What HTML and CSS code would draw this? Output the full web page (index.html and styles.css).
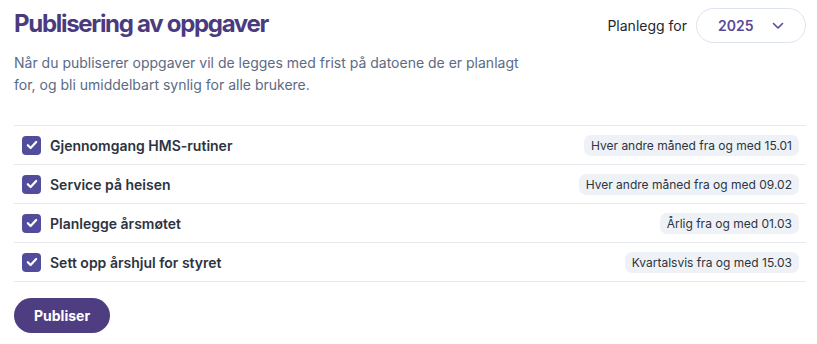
FILE: index.html
```html
<!DOCTYPE html>
<html lang="no">
<head>
    <meta charset="UTF-8">
    <meta name="viewport" content="width=device-width, initial-scale=1.0">
    <title>Publisering av oppgaver</title>
    <link rel="stylesheet" href="styles.css">
</head>
<body>
    <div class="panel">
        <div class="header">
            <div class="intro">
                <h1 class="title">Publisering av oppgaver</h1>
                <p class="desc">Når du publiserer oppgaver vil de legges med frist på datoene de er planlagt for, og bli umiddelbart synlig for alle brukere.</p>
            </div>
            <div class="plan">
                <span class="plan-label">Planlegg for</span>
                <div class="select">
                    <span class="select-value">2025</span>
                    <svg class="chevron" width="12" height="8" viewBox="0 0 12 8"><path d="M1.5 1.5 6 6l4.5-4.5" fill="none" stroke="#5a4a96" stroke-width="1.6" stroke-linecap="round" stroke-linejoin="round"/></svg>
                </div>
            </div>
        </div>

        <div class="tasks">
            <div class="task">
                <span class="check"><svg width="12" height="10" viewBox="0 0 12 10"><path d="M1.8 5.2 4.6 8 10.2 2" fill="none" stroke="#fff" stroke-width="2.2" stroke-linecap="round" stroke-linejoin="round"/></svg></span>
                <span class="task-name">Gjennomgang HMS-rutiner</span>
                <span class="pill">Hver andre måned fra og med 15.01</span>
            </div>
            <div class="task">
                <span class="check"><svg width="12" height="10" viewBox="0 0 12 10"><path d="M1.8 5.2 4.6 8 10.2 2" fill="none" stroke="#fff" stroke-width="2.2" stroke-linecap="round" stroke-linejoin="round"/></svg></span>
                <span class="task-name">Service på heisen</span>
                <span class="pill">Hver andre måned fra og med 09.02</span>
            </div>
            <div class="task">
                <span class="check"><svg width="12" height="10" viewBox="0 0 12 10"><path d="M1.8 5.2 4.6 8 10.2 2" fill="none" stroke="#fff" stroke-width="2.2" stroke-linecap="round" stroke-linejoin="round"/></svg></span>
                <span class="task-name">Planlegge årsmøtet</span>
                <span class="pill">Årlig fra og med 01.03</span>
            </div>
            <div class="task">
                <span class="check"><svg width="12" height="10" viewBox="0 0 12 10"><path d="M1.8 5.2 4.6 8 10.2 2" fill="none" stroke="#fff" stroke-width="2.2" stroke-linecap="round" stroke-linejoin="round"/></svg></span>
                <span class="task-name">Sett opp årshjul for styret</span>
                <span class="pill">Kvartalsvis fra og med 15.03</span>
            </div>
        </div>

        <button class="publish">Publiser</button>
    </div>
</body>
</html>
```

FILE: styles.css
```css
body {
    margin: 0;
    font-family: Inter, "Noto Sans", sans-serif;
    background: #ffffff;
    color: #2d3340;
}
.panel {
    padding: 8px 11px 0 14px;
}
.header {
    display: flex;
    justify-content: space-between;
    align-items: flex-start;
}
.title {
    margin: 0;
    font-size: 24px;
    font-weight: 700;
    letter-spacing: -1.3px;
    line-height: 32px;
    color: #4b3b7e;
}
.desc {
    margin: 12px 0 0;
    max-width: 520px;
    font-size: 14px;
    line-height: 22px;
    color: #5b6a85;
}
.plan {
    display: flex;
    align-items: center;
    gap: 9px;
}
.plan-label {
    font-size: 14px;
    color: #222733;
}
.select {
    display: flex;
    align-items: center;
    justify-content: space-between;
    box-sizing: border-box;
    width: 110px;
    height: 35px;
    padding: 0 21px 0 21px;
    border: 1px solid #dde3ee;
    border-radius: 18px;
}
.select-value {
    font-size: 14px;
    font-weight: 600;
    color: #5a4a96;
}
.tasks {
    margin-top: 29px;
    border-top: 1px solid #e6e8ee;
}
.task {
    display: flex;
    align-items: center;
    height: 38px;
    padding: 0 7px 0 8px;
    border-bottom: 1px solid #e6e8ee;
}
.check {
    display: flex;
    align-items: center;
    justify-content: center;
    width: 19px;
    height: 19px;
    border-radius: 4px;
    background: #524c9c;
}
.task-name {
    margin-left: 9px;
    font-size: 14px;
    font-weight: 600;
    color: #2d3340;
}
.pill {
    margin-left: auto;
    padding: 3px 7px;
    border-radius: 7px;
    background: #eef2f7;
    font-size: 12px;
    color: #2d3340;
}
.publish {
    margin-top: 16px;
    height: 35px;
    padding: 0 20px;
    border: none;
    border-radius: 18px;
    background: #4e3d80;
    font-family: inherit;
    font-size: 14px;
    font-weight: 700;
    color: #ffffff;
}
```
